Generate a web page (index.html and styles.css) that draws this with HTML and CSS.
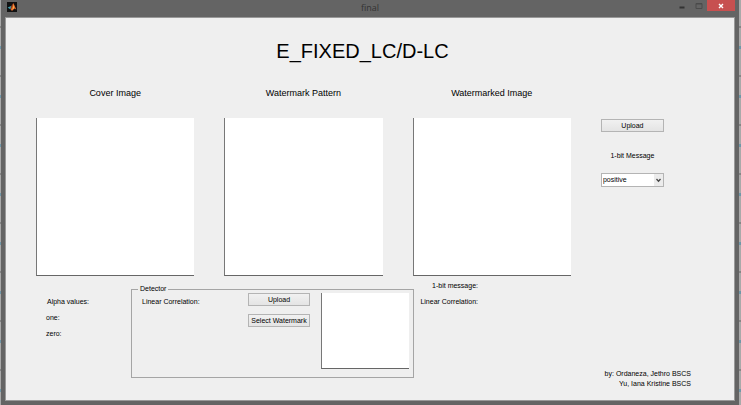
FILE: index.html
```html
<!DOCTYPE html>
<html lang="en">
<head>
<meta charset="utf-8">
<title>final</title>
<link rel="stylesheet" href="styles.css">
</head>
<body>
<div class="window">
  <header class="titlebar">
    <svg class="logo" viewBox="0 0 10 10" aria-hidden="true">
      <rect width="10" height="10" fill="#111"/>
      <path d="M0.6 5.6 3 4.6 4.4 3.8 5 5.2 3.2 7.2Z" fill="#3f9fae"/>
      <path d="M4 4.4 6.2 1.2 5.6 5.6 3.4 7.4Z" fill="#8a3a1c"/>
      <path d="M6.2 1 7.4 3.2 9.3 7.6 7.4 6.6 5 9 3.6 7.2 5.2 5.4Z" fill="#e8692a"/>
      <path d="M6.5 2.4 7.2 6 5.4 8Z" fill="#f7b04a"/>
    </svg>
    <span class="caption">final</span>
    <div class="window-buttons">
      <button class="win" type="button" aria-label="Minimize"><svg viewBox="0 0 8 8"><path d="M1.5 5.5h5" stroke="#333" stroke-width="2"/></svg></button>
      <button class="win" type="button" aria-label="Maximize"><svg viewBox="0 0 8 8"><path d="M1 1.5h6v5H1z" fill="none" stroke="#4b4b4b"/><path d="M1 2h6" stroke="#4b4b4b"/></svg></button>
      <button class="win close" type="button" aria-label="Close"><svg viewBox="0 0 8 8"><path d="M2 2l4 4M6 2 2 6" stroke="#fff" stroke-width="1.4"/></svg></button>
    </div>
  </header>
  <main class="client">
    <h1>E_FIXED_LC/D-LC</h1>
    <section class="images">
      <figure><figcaption>Cover Image</figcaption><div class="axes"></div></figure>
      <figure><figcaption>Watermark Pattern</figcaption><div class="axes"></div></figure>
      <figure><figcaption>Watermarked Image</figcaption><div class="axes"></div></figure>
      <div class="controls">
        <button class="push" type="button">Upload</button>
        <label for="message">1-bit Message</label>
        <div class="dropdown">
          <select id="message"><option>positive</option><option>negative</option></select>
          <svg viewBox="0 0 9 12" aria-hidden="true"><rect width="9" height="12" fill="#ececec"/><path d="M2.5 5 4.5 7.2 6.5 5" fill="none" stroke="#444" stroke-width="1.3"/></svg>
        </div>
      </div>
    </section>
    <section class="details">
      <div class="alpha">
        <p>Alpha values:</p>
        <p>one:</p>
        <p>zero:</p>
      </div>
      <fieldset>
        <legend>Detector</legend>
        <div class="detector">
          <p>Linear Correlation:</p>
          <div class="actions">
            <button class="push" type="button">Upload</button>
            <button class="push" type="button">Select Watermark</button>
          </div>
          <div class="axes preview"></div>
        </div>
      </fieldset>
      <div class="results">
        <div class="readout">
          <p>1-bit message:</p>
          <p>Linear Correlation:</p>
        </div>
        <footer>by: Ordaneza, Jethro BSCS<br>Yu, Iana Kristine BSCS</footer>
      </div>
    </section>
  </main>
</div>
</body>
</html>
```
FILE: styles.css
```css
* { box-sizing: border-box; }

body {
  margin: 0;
  padding: 0 2px 0 1px;
  min-height: 100vh;
  display: flex;
  background: repeating-linear-gradient(#a9a9a9 0 26px, #858585 26px 28px, #a9a9a9 28px 46px, #6f97a8 46px 49px);
  font: 7px/8px "Liberation Sans", Arial, sans-serif;
  color: #000;
}

p, h1, figure { margin: 0; }

.window {
  flex: 1;
  display: flex;
  flex-direction: column;
  padding: 0 4px 4px;
  background: #646464;
}

.titlebar {
  display: grid;
  grid-template-columns: 1fr auto 1fr;
  height: 17px;
}

.logo {
  width: 10px;
  height: 10px;
  margin: 2px;
}

.caption {
  font: 9px/16px "Open Sans", sans-serif;
  color: #333;
}

.window-buttons {
  display: flex;
  justify-content: flex-end;
  align-items: flex-start;
}

.win {
  width: 17px;
  height: 11px;
  padding: 0;
  border: 0;
  background: none;
  display: flex;
  align-items: center;
  justify-content: center;
}

.win svg { width: 8px; height: 8px; }

.close {
  width: 28px;
  background: #c75050;
}

.client {
  flex: 1;
  display: flex;
  flex-direction: column;
  padding-top: 21px;
  border: 1px solid #999;
  background: #efefef;
}

h1 {
  padding-right: 15px;
  margin-bottom: 24px;
  font-size: 20px;
  line-height: 24px;
  font-weight: 400;
  text-align: center;
}

.images {
  display: grid;
  grid-template-columns: 158fr 158fr 158fr 63fr;
  gap: 30px;
  padding: 0 70px 0 30px;
}

figcaption {
  margin-bottom: 19px;
  font-size: 9px;
  line-height: 12px;
  text-align: center;
}

.axes {
  aspect-ratio: 1;
  background: #fff;
  border-left: 1px solid #777;
  border-bottom: 1px solid #666;
}

.controls {
  display: flex;
  flex-direction: column;
  padding-top: 32px;
}

.controls label {
  margin: 20px 0 13px;
  text-align: center;
}

.push {
  height: 13px;
  padding: 0;
  border: 1px solid #b4b4b4;
  background: linear-gradient(#f1f1f1, #e4e4e4);
  font: inherit;
  color: inherit;
  white-space: nowrap;
}

.dropdown {
  display: flex;
  height: 14px;
  border: 1px solid #b4b4b4;
  background: #fff;
}

.dropdown select {
  flex: 1;
  min-width: 0;
  padding: 0 0 0 1px;
  border: 0;
  appearance: none;
  background: none;
  font: inherit;
  color: inherit;
}

.dropdown svg { width: 9px; height: 12px; }

.details {
  flex: 1;
  display: grid;
  grid-template-columns: 125fr 283fr 320fr;
}

.alpha {
  display: flex;
  flex-direction: column;
  gap: 8px;
  padding: 22px 0 0 40px;
}

.alpha p:first-child { padding-left: 1px; }

fieldset {
  align-self: start;
  min-width: 0;
  margin: 9px 0 0;
  padding: 0 4px 8px 10px;
  border: 1px solid #a5a5a5;
}

legend {
  margin-left: -4px;
  padding: 0 2px;
}

.detector { display: flex; }

.detector p {
  flex: 1;
  padding-top: 5px;
}

.actions {
  display: flex;
  flex-direction: column;
  gap: 8px;
  width: 62px;
  margin-right: 11px;
}

.preview {
  aspect-ratio: auto;
  width: 88px;
  height: 76px;
}

.results {
  display: flex;
  flex-direction: column;
  justify-content: space-between;
  padding: 6px 43px 11px 6px;
}

.readout {
  display: flex;
  flex-direction: column;
  align-items: flex-end;
  gap: 8px;
  width: 58px;
}

footer {
  line-height: 10px;
  text-align: right;
}
```
